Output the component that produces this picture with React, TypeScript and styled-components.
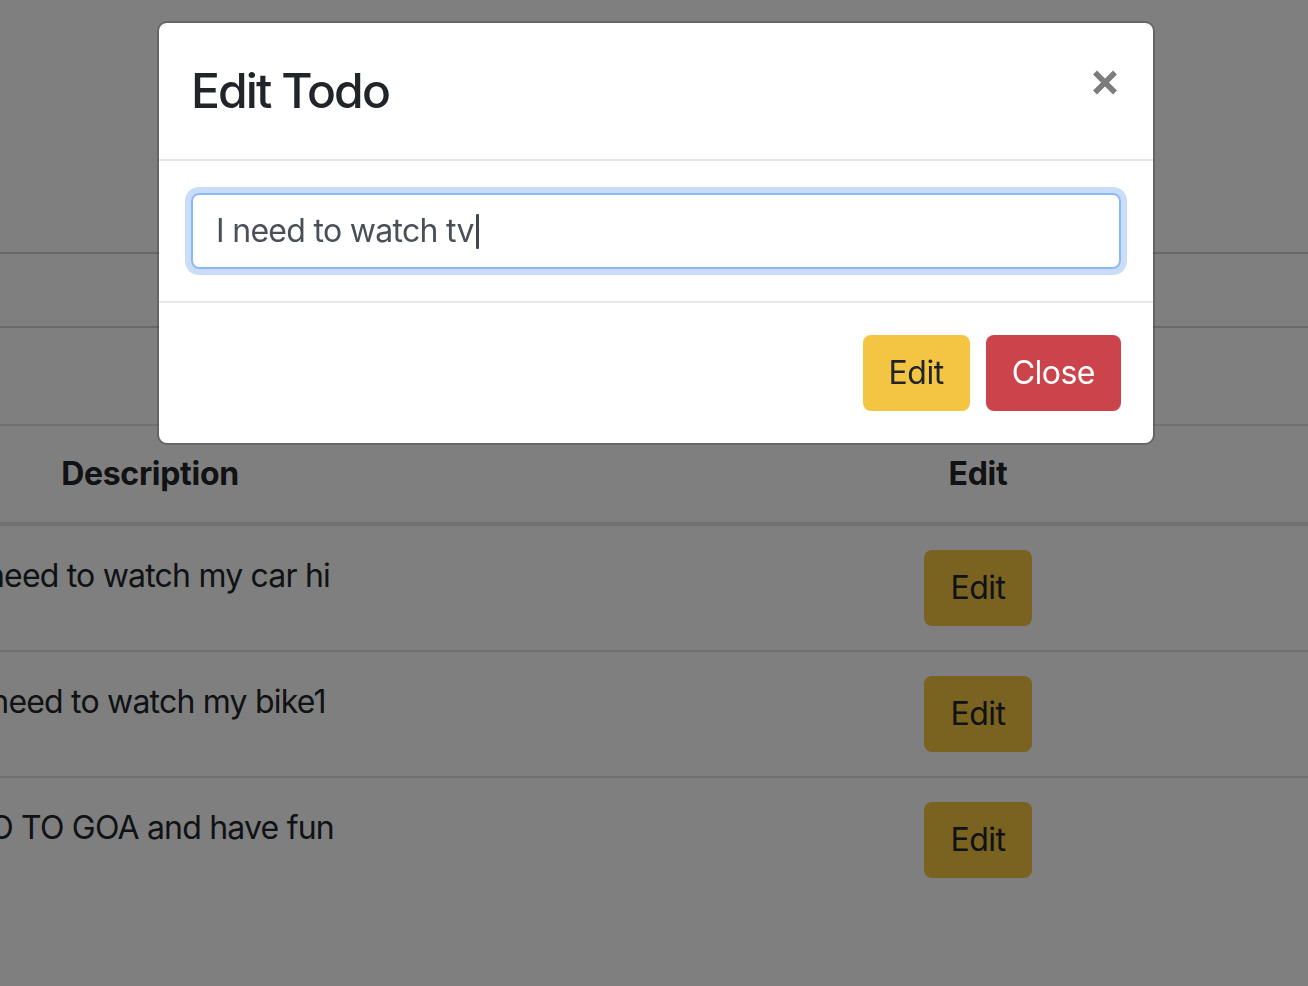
import React from "react";
import styled, { createGlobalStyle } from "styled-components";

const GlobalStyle = createGlobalStyle`
  html, body { margin: 0; padding: 0; background: #ffffff; overflow: hidden; }
  body {
    font-family: Inter, "Liberation Sans", Arial, sans-serif;
    color: #212529;
  }
  * { box-sizing: border-box; }
`;

const Page = styled.div`
  width: 1308px;
  height: 986px;
  overflow: hidden;
  padding-top: 252px;
`;

const TodoInput = styled.div`
  height: 76px;
  border-top: 2px solid #ced4da;
  border-bottom: 2px solid #ced4da;
  background: #ffffff;
`;

const Table = styled.div`
  margin-top: 96px;
`;

const HeadRow = styled.div`
  display: grid;
  grid-template-columns: 300px 1fr 300px 180px;
  border-top: 2px solid #dee2e6;
  border-bottom: 4px solid #dee2e6;
`;

const BodyRow = styled.div`
  display: grid;
  grid-template-columns: 300px 1fr 300px 180px;
  & + & {
    border-top: 2px solid #dee2e6;
  }
`;

const Cell = styled.div<{ $head?: boolean; $text?: boolean }>`
  display: flex;
  justify-content: center;
  align-items: flex-start;
  padding: ${(p) => (p.$text ? "26px 0 22px" : "24px 0")};
  white-space: nowrap;
  font-size: 32px;
  line-height: 48px;
  letter-spacing: ${(p) => (p.$head ? "-0.3px" : "-0.8px")};
  font-weight: ${(p) => (p.$head ? 700 : 400)};
  color: #212529;
`;

const Btn = styled.button<{ $variant: "warning" | "danger" }>`
  height: 76px;
  padding: 0 24px;
  border: 2px solid transparent;
  border-radius: 8px;
  font-family: inherit;
  font-size: 32px;
  line-height: 48px;
  letter-spacing: -0.5px;
  font-weight: 400;
  cursor: pointer;
  background: ${(p) => (p.$variant === "warning" ? "#f4c443" : "#cc444b")};
  color: ${(p) => (p.$variant === "warning" ? "#212529" : "#ffffff")};
`;

const Backdrop = styled.div`
  position: fixed;
  inset: 0;
  background: rgba(0, 0, 0, 0.5);
`;

const Dialog = styled.div`
  position: fixed;
  top: 21px;
  left: 157px;
  width: 998px;
  background: #ffffff;
  background-clip: padding-box;
  border: 2px solid rgba(0, 0, 0, 0.2);
  border-radius: 10px;
  display: flex;
  flex-direction: column;
`;

const Header = styled.div`
  display: flex;
  align-items: flex-start;
  padding: 32px;
  border-bottom: 2px solid #e6e7ec;
`;

const Title = styled.h4`
  margin: 0;
  font-size: 48px;
  line-height: 72px;
  font-weight: 500;
  letter-spacing: -1.9px;
  color: #212529;
`;

const CloseX = styled.button`
  margin: 15px 3px 0 auto;
  padding: 0;
  border: 0;
  background: transparent;
  display: flex;
  cursor: pointer;
`;

const Body = styled.div`
  padding: 32px;
  border-bottom: 2px solid #e6e7ec;
`;

const FieldBox = styled.div`
  height: 76px;
  border: 2px solid #8bb9f5;
  border-radius: 8px;
  box-shadow: 0 0 0 6px #c9dcfa;
  padding: 0 23px;
  display: flex;
  align-items: center;
  font-size: 32px;
  line-height: 48px;
  letter-spacing: -0.7px;
  color: #495057;
`;

const Caret = styled.span`
  display: inline-block;
  width: 3px;
  height: 35px;
  background: #3f464d;
  margin-left: 2px;
  border-radius: 1px;
`;

const Footer = styled.div`
  display: flex;
  justify-content: flex-end;
  gap: 16px;
  padding: 32px;
`;

const todos = ["I need to watch my car hi", "I need to watch my bike1", "GO TO GOA and have fun"];

export default function App() {
  return (
    <>
      <GlobalStyle />
      <Page>
        <TodoInput />
        <Table>
          <HeadRow>
            <Cell $head>Description</Cell>
            <Cell $head />
            <Cell $head>Edit</Cell>
            <Cell $head />
          </HeadRow>
          {todos.map((t) => (
            <BodyRow key={t}>
              <Cell $text>{t}</Cell>
              <Cell />
              <Cell>
                <Btn $variant="warning">Edit</Btn>
              </Cell>
              <Cell />
            </BodyRow>
          ))}
        </Table>
      </Page>
      <Backdrop />
      <Dialog role="dialog">
        <Header>
          <Title>Edit Todo</Title>
          <CloseX aria-label="Close">
            <svg width="26" height="25" viewBox="0 0 26 25">
              <path d="M3 2.5 L23 22.5 M23 2.5 L3 22.5" stroke="#7c7c7c" strokeWidth="5.5" strokeLinecap="butt" />
            </svg>
          </CloseX>
        </Header>
        <Body>
          <FieldBox role="textbox">
            I need to watch tv
            <Caret />
          </FieldBox>
        </Body>
        <Footer>
          <Btn $variant="warning">Edit</Btn>
          <Btn $variant="danger">Close</Btn>
        </Footer>
      </Dialog>
    </>
  );
}
